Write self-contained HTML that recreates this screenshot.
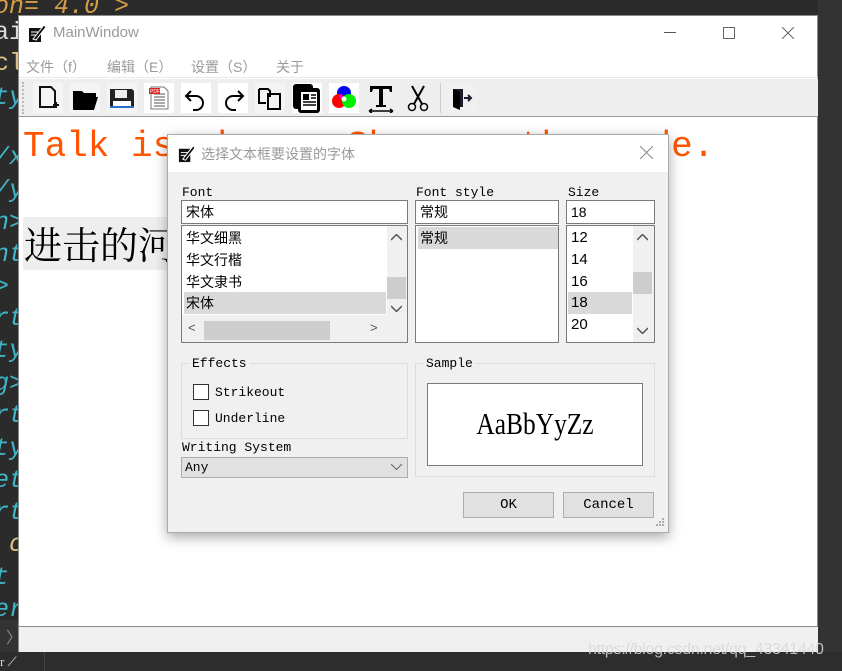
<!DOCTYPE html>
<html><head><meta charset="utf-8"><style>
*{margin:0;padding:0;box-sizing:border-box}
body{width:842px;height:671px;overflow:hidden;background:#2b2b2b;position:relative;font-family:"Liberation Sans","Noto Sans CJK SC",sans-serif}
.a{position:absolute}
.code{position:absolute;left:-6px;font-family:"Liberation Mono",monospace;font-style:italic;font-size:25px;color:#3fb6c8;white-space:pre;line-height:25px}
.mono{font-family:"Liberation Mono","Noto Sans CJK SC",monospace}
.cjk{font-family:"Noto Serif CJK SC","Noto Sans CJK SC",serif}
.tile{position:absolute;top:83px;width:30px;height:30px;background:#fff}
.box{position:absolute;background:#fff;border:1px solid #7a7a7a}
.li{position:absolute;font-size:14px;font-family:"Noto Sans CJK SC",sans-serif;line-height:22px;padding-left:4px}
.btn{position:absolute;background:#e1e1e1;border:1px solid #adadad;font-family:"Liberation Mono",monospace;font-size:14px;text-align:center;line-height:24px}
</style></head><body>
<div class="code" style="top:-6px;color:#d69d46">on= 4.0 ></div>
<div class="code" style="top:20px;color:#ddd;font-style:normal">ai</div>
<div class="code" style="top:51px;color:#e0c080;font-style:normal">cl</div>
<div class="code" style="top:85px">ty</div>
<div class="code" style="top:145px">/x</div>
<div class="code" style="top:178px">/y</div>
<div class="code" style="top:210px">n></div>
<div class="code" style="top:242px">nt</div>
<div class="code" style="top:274px">></div>
<div class="code" style="top:306px">rt</div>
<div class="code" style="top:338px">ty</div>
<div class="code" style="top:371px">g></div>
<div class="code" style="top:403px">rt</div>
<div class="code" style="top:436px">ty</div>
<div class="code" style="top:468px">et</div>
<div class="code" style="top:500px">rt</div>
<div class="code" style="top:532px;color:#e0c080"> c</div>
<div class="code" style="top:565px">t</div>
<div class="code" style="top:597px">er</div>
<div class="a" style="left:0;top:620px;width:18px;height:32px;background:#333"></div>
<div class="a" style="left:6px;top:624px;color:#888;font-size:16px">〉</div>
<div class="a" style="left:0;top:652px;width:842px;height:19px;background:#2d2d2d"></div>
<div class="a" style="left:44px;top:652px;width:1px;height:19px;background:#444"></div>
<div class="a" style="left:0;top:654px;color:#ddd;font-size:13px;font-family:'Liberation Serif'">r ⟋</div>
<div class="a" style="left:818px;top:0;width:24px;height:652px;background:#333"></div>

<div class="a" style="left:18px;top:15px;width:800px;height:637px;background:#fff;border:1px solid #8a8a8a"></div>
<svg class="a" style="left:27px;top:23px" width="20" height="20" viewBox="0 0 20 20"><path d="M2 5h12v14H2z" fill="#111"/><path d="M6 16L17 2l2 2L9 17z" fill="#111" stroke="#fff" stroke-width="1"/><path d="M4 9h7M4 12h5" stroke="#fff"/></svg>
<div class="a" style="left:53px;top:24px;font-size:15px;color:#999">MainWindow</div>
<div class="a" style="left:664px;top:32px;width:12px;height:1px;background:#555"></div>
<div class="a" style="left:723px;top:27px;width:12px;height:12px;border:1px solid #666"></div>
<svg class="a" style="left:782px;top:27px" width="12" height="12"><path d="M0 0L12 12M12 0L0 12" stroke="#666"/></svg>
<div class="a" style="left:26px;top:57px;font-size:14px;color:#9a9a9a">文件（f）</div>
<div class="a" style="left:107px;top:57px;font-size:14px;color:#9a9a9a">编辑（E）</div>
<div class="a" style="left:191px;top:57px;font-size:14px;color:#9a9a9a">设置（S）</div>
<div class="a" style="left:276px;top:57px;font-size:14px;color:#9a9a9a">关于</div>
<div class="a" style="left:19px;top:77px;width:799px;height:1px;background:#e8e8e8"></div>
<div class="a" style="left:19px;top:79px;width:799px;height:38px;background:#eeeeee;border-bottom:1px solid #999"></div>
<div class="a" style="left:22px;top:82px;width:2px;height:32px;border-left:2px dotted #bbb"></div>
<div class="tile" style="left:33px;background:#f4f4f4"><svg width="30" height="30"><path d="M7 4h11l4 4v16H7z" fill="none" stroke="#111" stroke-width="2"/><path d="M20 22h6M23 19v6" stroke="#111" stroke-width="2"/></svg></div>
<div class="tile" style="left:70px;background:#f4f4f4"><svg width="30" height="30"><path d="M3 8h9l2 2h12v4H8l-4 12H3z" fill="#000"/><path d="M8 14h20l-4 13H3z" fill="#000"/></svg></div>
<div class="tile" style="left:107px;background:#f4f4f4"><svg width="30" height="30"><path d="M3 6h22l2 2v16H3z" fill="#222"/><rect x="8" y="7" width="12" height="8" fill="#eee"/><rect x="6" y="18" width="18" height="5" fill="#fff"/><rect x="3" y="23" width="24" height="2" fill="#2a6fd0"/></svg></div>
<div class="tile" style="left:144px"><svg width="30" height="30"><path d="M7 4h13l4 4v18H7z" fill="#fff" stroke="#777"/><path d="M10 11h11M10 14h11M10 17h11M10 20h11M10 23h11" stroke="#555"/><rect x="5" y="5" width="11" height="6" fill="#d22"/><text x="6" y="10" font-size="5" fill="#fff" font-family="Liberation Sans">PDF</text></svg></div>
<div class="tile" style="left:181px"><svg width="30" height="30"><path d="M10 8L5 13l5 5M5 13h10a7 7 0 010 14h-3" fill="none" stroke="#000" stroke-width="2"/></svg></div>
<div class="tile" style="left:218px"><svg width="30" height="30"><path d="M20 8l5 5-5 5M25 13H15a7 7 0 000 14h3" fill="none" stroke="#000" stroke-width="2"/></svg></div>
<div class="tile" style="left:255px;background:#f4f4f4"><svg width="30" height="30"><path d="M4 6h9l2 2v6M4 6v14h7" fill="none" stroke="#000" stroke-width="2"/><rect x="13" y="11" width="12" height="15" fill="none" stroke="#000" stroke-width="2"/></svg></div>
<div class="tile" style="left:292px"><svg width="30" height="30"><rect x="1" y="1" width="20" height="25" rx="3" fill="#000"/><rect x="6" y="5" width="22" height="25" rx="3" fill="#000"/><rect x="9" y="9" width="16" height="18" fill="#fff"/><rect x="11" y="11" width="6" height="6" fill="#000"/><path d="M19 12h5M19 15h5M11 19h13M11 22h13" stroke="#000" stroke-width="1.5"/></svg></div>
<div class="tile" style="left:329px"><svg width="30" height="30"><circle cx="15" cy="10" r="7" fill="#0000ff"/><circle cx="10" cy="18" r="7" fill="#ff0000"/><circle cx="20" cy="18" r="7" fill="#00ee00"/><path d="M10 11a7 7 0 0 1 5 6a7 7 0 0 1 -5 -6z" fill="#f0f"/><circle cx="15" cy="16" r="2.5" fill="#fff"/></svg></div>
<div class="tile" style="left:366px;background:#eee"><svg width="30" height="30"><path d="M4 3h22v6h-2l-1-3h-6v16h3v2H10v-2h3V6H7L6 9H4z" fill="#000"/><path d="M3 28h24M3 28l3-2M3 28l3 2M27 28l-3-2M27 28l-3 2" stroke="#000" stroke-width="1.5"/></svg></div>
<div class="tile" style="left:403px;background:#eee"><svg width="30" height="30"><path d="M9 3l10 18M21 3L11 21" stroke="#000" stroke-width="2"/><circle cx="9" cy="24" r="3.5" fill="none" stroke="#000" stroke-width="1.5"/><circle cx="21" cy="24" r="3.5" fill="none" stroke="#000" stroke-width="1.5"/></svg></div>
<div class="a" style="left:440px;top:83px;width:1px;height:30px;background:#ccc"></div>
<div class="tile" style="left:447px;background:#f0f0f0"><svg width="30" height="30"><path d="M6 6h10v18H6z" fill="#1c1c2c"/><path d="M6 6l7 3v18l-7-3z" fill="#000"/><path d="M17 15h7M21 12l3 3-3 3" stroke="#1c1c2c" stroke-width="2" fill="none"/></svg></div>

<div class="a" style="left:23px;top:125px;font-family:'Liberation Mono',monospace;font-size:36px;color:#ff5500;white-space:pre;line-height:44px">Talk is cheap. Show me the code.</div>
<div class="a" style="left:23px;top:217px;width:160px;height:53px;background:#eeeeee"></div>
<div class="a cjk" style="left:24px;top:218px;font-size:38px;color:#000;line-height:50px">进击的河马</div>
<div class="a" style="left:19px;top:626px;width:799px;height:26px;background:#f0f0f0;border-top:1px solid #8a8a8a"></div>

<div class="a" style="left:167px;top:134px;width:502px;height:399px;background:#f0f0f0;border:1px solid #aaa;box-shadow:0 4px 12px rgba(0,0,0,.35)"></div>
<div class="a" style="left:168px;top:135px;width:500px;height:37px;background:#fff"></div>
<svg class="a" style="left:177px;top:144px" width="19" height="19" viewBox="0 0 20 20"><path d="M2 5h12v14H2z" fill="#111"/><path d="M6 16L17 2l2 2L9 17z" fill="#111" stroke="#fff" stroke-width="1"/><path d="M4 9h7M4 12h5" stroke="#fff"/></svg>
<div class="a" style="left:201px;top:144px;font-size:14px;color:#999">选择文本框要设置的字体</div>
<svg class="a" style="left:640px;top:146px" width="13" height="13"><path d="M0 0L13 13M13 0L0 13" stroke="#888"/></svg>

<div class="a mono" style="left:182px;top:185px;font-size:13px">Font</div>
<div class="a mono" style="left:416px;top:185px;font-size:13px">Font style</div>
<div class="a mono" style="left:568px;top:185px;font-size:13px">Size</div>
<div class="box" style="left:181px;top:200px;width:227px;height:24px"></div>
<div class="li" style="left:182px;top:201px">宋体</div>
<div class="box" style="left:415px;top:200px;width:144px;height:24px"></div>
<div class="li" style="left:416px;top:201px">常规</div>
<div class="box" style="left:566px;top:200px;width:89px;height:24px"></div>
<div class="li" style="left:567px;top:201px;font-family:'Liberation Sans'">18</div>
<div class="box" style="left:181px;top:225px;width:227px;height:118px;overflow:hidden">
 <div class="li" style="left:0;top:1px">华文细黑</div>
 <div class="li" style="left:0;top:23px">华文行楷</div>
 <div class="li" style="left:0;top:45px">华文隶书</div>
 <div class="a" style="left:2px;top:66px;width:202px;height:22px;background:#d9d9d9"></div>
 <div class="li" style="left:0;top:66px">宋体</div>
 <div class="a" style="left:0;top:89px;width:205px;height:27px;background:#f0f0f0"></div>
 <div class="a" style="left:22px;top:95px;width:126px;height:19px;background:#cdcdcd"></div>
 <div class="a" style="left:6px;top:94px;font-size:13px;color:#555">&lt;</div>
 <div class="a" style="left:188px;top:94px;font-size:13px;color:#555">&gt;</div>
 <div class="a" style="left:205px;top:0;width:20px;height:116px;background:#f0f0f0"></div>
 <div class="a" style="left:205px;top:51px;width:19px;height:22px;background:#cdcdcd"></div>
 <svg class="a" style="left:209px;top:8px" width="11" height="7"><path d="M0 6l5.5-5.5L11 6" fill="none" stroke="#555" stroke-width="1.5"/></svg>
 <svg class="a" style="left:209px;top:79px" width="11" height="7"><path d="M0 1l5.5 5.5L11 1" fill="none" stroke="#555" stroke-width="1.5"/></svg>
</div>
<div class="box" style="left:415px;top:225px;width:144px;height:118px">
 <div class="a" style="left:2px;top:1px;width:140px;height:22px;background:#d9d9d9"></div>
 <div class="li" style="left:0;top:1px">常规</div>
</div>
<div class="box" style="left:566px;top:225px;width:89px;height:118px;overflow:hidden">
 <div class="li" style="left:0;top:1px;font-family:'Liberation Sans';font-size:15px">12</div>
 <div class="li" style="left:0;top:23px;font-family:'Liberation Sans';font-size:15px">14</div>
 <div class="li" style="left:0;top:45px;font-family:'Liberation Sans';font-size:15px">16</div>
 <div class="a" style="left:1px;top:66px;width:64px;height:22px;background:#d9d9d9"></div>
 <div class="li" style="left:0;top:66px;font-family:'Liberation Sans';font-size:15px">18</div>
 <div class="li" style="left:0;top:88px;font-family:'Liberation Sans';font-size:15px">20</div>
 <div class="a" style="left:66px;top:0;width:21px;height:116px;background:#f0f0f0"></div>
 <div class="a" style="left:66px;top:46px;width:19px;height:22px;background:#cdcdcd"></div>
 <svg class="a" style="left:70px;top:8px" width="11" height="7"><path d="M0 6l5.5-5.5L11 6" fill="none" stroke="#555" stroke-width="1.5"/></svg>
 <svg class="a" style="left:70px;top:101px" width="11" height="7"><path d="M0 1l5.5 5.5L11 1" fill="none" stroke="#555" stroke-width="1.5"/></svg>
</div>
<div class="a" style="left:181px;top:363px;width:227px;height:76px;border:1px solid #dcdcdc"></div>
<div class="a mono" style="left:189px;top:356px;font-size:13px;background:#f0f0f0;padding:0 3px">Effects</div>
<div class="a" style="left:193px;top:384px;width:16px;height:16px;border:1px solid #333;background:#fff"></div>
<div class="a mono" style="left:215px;top:385px;font-size:13px">Strikeout</div>
<div class="a" style="left:193px;top:410px;width:16px;height:16px;border:1px solid #333;background:#fff"></div>
<div class="a mono" style="left:215px;top:411px;font-size:13px">Underline</div>
<div class="a mono" style="left:182px;top:440px;font-size:13px">Writing System</div>
<div class="a" style="left:181px;top:457px;width:227px;height:21px;background:#e1e1e1;border:1px solid #adadad"></div>
<div class="a mono" style="left:185px;top:460px;font-size:13px">Any</div>
<svg class="a" style="left:391px;top:464px" width="11" height="7"><path d="M0 0l5.5 5.5L11 0" fill="none" stroke="#666"/></svg>
<div class="a" style="left:415px;top:363px;width:240px;height:114px;border:1px solid #dcdcdc"></div>
<div class="a mono" style="left:423px;top:356px;font-size:13px;background:#f0f0f0;padding:0 3px">Sample</div>
<div class="a" style="left:427px;top:383px;width:216px;height:83px;background:#fff;border:1px solid #7a7a7a"></div>
<div class="a" style="left:427px;top:406px;width:216px;text-align:center;font-family:'Liberation Serif',serif;font-size:31px;color:#000;transform:scaleX(.82)">AaBbYyZz</div>
<div class="btn" style="left:463px;top:492px;width:91px;height:26px">OK</div>
<div class="btn" style="left:563px;top:492px;width:91px;height:26px">Cancel</div>
<svg class="a" style="left:655px;top:518px" width="10" height="10"><g fill="#aaa"><rect x="7" y="0" width="2" height="2"/><rect x="4" y="3" width="2" height="2"/><rect x="7" y="3" width="2" height="2"/><rect x="1" y="6" width="2" height="2"/><rect x="4" y="6" width="2" height="2"/><rect x="7" y="6" width="2" height="2"/></g></svg>

<div class="a" style="left:588px;top:641px;font-size:16px;color:#d8d8d8;font-family:'Liberation Sans Narrow','Liberation Sans',sans-serif;letter-spacing:-.3px;opacity:.85">https://blog.csdn.net/qq_43341440</div>
</body></html>
